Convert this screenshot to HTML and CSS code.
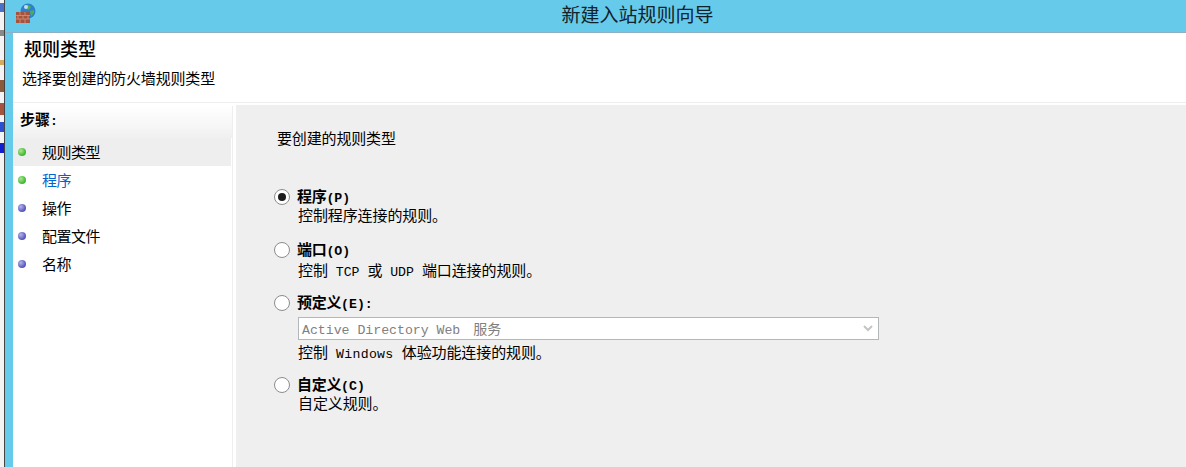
FILE: index.html
```html
<!DOCTYPE html>
<html lang="zh-CN">
<head>
  <meta charset="UTF-8">
  <title>新建入站规则向导</title>
  <link rel="stylesheet" href="styles.css">
</head>
<body>
  <div class="desktop">
    <i class="bit bit-a"></i>
    <i class="bit bit-b"></i>
    <i class="bit bit-c"></i>
    <i class="bit bit-d"></i>
    <i class="bit bit-e"></i>
    <i class="bit bit-f"></i>
    <i class="bit bit-g"></i>
  </div>

  <div class="window">
    <div class="titlebar">
      <svg class="app-icon" width="22" height="22" viewBox="0 0 22 22">
        <circle cx="13" cy="9" r="7.5" fill="#2f7fd0"/>
        <path d="M9 4c3-2 6-1 7 1l-2 3-3-1zM15 9l4-1 0 3-3 3z" fill="#4fb04a"/>
        <circle cx="11" cy="5" r="2" fill="#bfe0f5"/>
        <rect x="1" y="10" width="14" height="11" fill="#a5533c"/>
        <path d="M1 13.500h14M1 17h14M5 10v3.500M10 10v3.500M3 13.500v3.500M8 13.500v3.500M13 13.500v3.500M5 17v4M10 17v4" stroke="#c98a70" stroke-width="1" fill="none"/>
      </svg>
      <div class="title">新建入站规则向导</div>
    </div>

    <div class="head">
      <h1>规则类型</h1>
      <p>选择要创建的防火墙规则类型</p>
    </div>

    <div class="main">
      <div class="steps">
        <div class="steps-title">步骤<span class="latin">:</span></div>
        <ul>
          <li class="current"><span class="dot green"></span>规则类型</li>
          <li class="link"><span class="dot green"></span>程序</li>
          <li><span class="dot blue"></span>操作</li>
          <li><span class="dot blue"></span>配置文件</li>
          <li><span class="dot blue"></span>名称</li>
        </ul>
      </div>

      <div class="panel">
        <div class="question">要创建的规则类型</div>

        <div class="option first">
          <span class="radio checked"></span>
          <div class="option-body">
            <div class="label">程序<span class="latin">(P)</span></div>
            <div class="desc">控制程序连接的规则。</div>
          </div>
        </div>

        <div class="option second">
          <span class="radio"></span>
          <div class="option-body">
            <div class="label">端口<span class="latin">(O)</span></div>
            <div class="desc">控制<span class="latin"> TCP </span>或<span class="latin"> UDP </span>端口连接的规则。</div>
          </div>
        </div>

        <div class="option third">
          <span class="radio"></span>
          <div class="option-body">
            <div class="label">预定义<span class="latin">(E):</span></div>
            <div class="select">
              <span class="select-text"><span class="latin">Active Directory Web </span><span class="svc">服务</span></span>
              <svg width="10" height="7" viewBox="0 0 10 7"><path d="M1 1l4 4 4-4" fill="none" stroke="#c4c4c4" stroke-width="2"/></svg>
            </div>
            <div class="desc">控制<span class="latin"> Windows </span>体验功能连接的规则。</div>
          </div>
        </div>

        <div class="option fourth">
          <span class="radio"></span>
          <div class="option-body">
            <div class="label">自定义<span class="latin">(C)</span></div>
            <div class="desc">自定义规则。</div>
          </div>
        </div>
      </div>
    </div>
  </div>
</body>
</html>
```

FILE: styles.css
```css
html, body {
  margin: 0;
  height: 467px;
  overflow: hidden;
}

body {
  display: flex;
  font-family: "Noto Sans CJK SC", "Liberation Sans", sans-serif;
  font-size: 15px;
  color: #000;
  background: #fff;
}

.desktop {
  width: 4px;
  flex: none;
  display: flex;
  flex-direction: column;
  background: #f4f4f4;
  border-right: 1px solid #444;
}

.bit {
  display: block;
}

.bit-a { height: 9px; margin-top: 3px; background: #4a70c8; }
.bit-b { height: 6px; margin-top: 18px; background: #888; }
.bit-c { height: 5px; margin-top: 24px; background: #d8a860; }
.bit-d { height: 12px; margin-top: 15px; background: #8a5a3a; }
.bit-e { height: 12px; margin-top: 11px; background: #a5533c; }
.bit-f { height: 10px; margin-top: 7px; background: #2a4fd0; }
.bit-g { height: 10px; margin-top: 11px; background: #1020d0; }

.window {
  flex: 1;
  display: flex;
  flex-direction: column;
  border-left: 8px solid #66caea;
  min-width: 0;
}

.titlebar {
  height: 32px;
  flex: none;
  position: relative;
  background: #66caea;
  border-bottom: 1px solid #8fb0c4;
  margin-left: -8px;
  display: flex;
  align-items: center;
  justify-content: center;
}

.app-icon {
  position: absolute;
  left: 10px;
  top: 2px;
}

.title {
  font-size: 19px;
  color: #10222c;
  margin-left: 84px;
  padding-bottom: 5px;
}

.head {
  height: 70px;
  flex: none;
  box-sizing: border-box;
  padding: 2px 0 0 9px;
  border-bottom: 1px solid #eee;
}

.head h1 {
  margin: 0 0 0 2px;
  font-size: 18px;
  line-height: 26px;
  font-weight: 500;
}

.head p {
  margin: 6px 0 0;
  font-size: 15px;
  line-height: 22px;
  letter-spacing: -0.15px;
}

.main {
  flex: 1;
  display: flex;
  min-height: 0;
}

.steps {
  width: 220px;
  flex: none;
  box-sizing: border-box;
  margin-top: 3px;
  border-right: 1px solid #eee;
}

.steps-title {
  height: 32px;
  line-height: 26px;
  padding-left: 7px;
  font-weight: 700;
  background: linear-gradient(#fff, #f0f0f0);
}

.steps-title .latin {
  font-weight: 700;
}

.steps ul {
  list-style: none;
  margin: 0;
  padding: 0;
}

.steps li {
  height: 28px;
  width: 218px;
  box-sizing: border-box;
  padding-bottom: 1px;
  display: flex;
  align-items: center;
  letter-spacing: -0.5px;
}

.steps li.current {
  background: #eee;
}

.steps li.link {
  color: #0066cc;
}

.dot {
  width: 8px;
  height: 8px;
  border-radius: 50%;
  margin: 0 16px 0 5px;
}

.green {
  background: radial-gradient(circle at 35% 35%, #a8e890, #3fb52f 70%);
}

.blue {
  background: radial-gradient(circle at 35% 35%, #b4b4ea, #5252b8 70%);
}

.panel {
  flex: 1;
  margin: 2px 0 0 3px;
  background: #efefef;
  padding-left: 41px;
  min-width: 0;
}

.question {
  margin-top: 22px;
  line-height: 22px;
  letter-spacing: -0.15px;
}

.option {
  display: flex;
}

.first { margin-top: 37px; }
.second { margin-top: 15px; }
.third { margin-top: 10px; }
.fourth { margin-top: 10px; }

.radio {
  width: 14px;
  height: 14px;
  margin: 3px 7px 0 -3px;
  flex: none;
  border: 1px solid #8c8c8c;
  border-radius: 50%;
  background: #fff;
  display: flex;
  align-items: center;
  justify-content: center;
}

.radio.checked::after {
  content: "";
  width: 8px;
  height: 8px;
  border-radius: 50%;
  background: #1c1c1c;
}

.label {
  height: 19px;
  line-height: 19px;
  font-weight: 700;
  letter-spacing: -0.3px;
}

.label .latin {
  font-weight: 700;
}

.desc {
  margin-left: 1px;
  line-height: 19px;
  letter-spacing: -0.1px;
}

.second .desc {
  margin-top: 2px;
}

.latin {
  font-family: "Liberation Mono", "Noto Sans CJK SC", monospace;
  font-size: 13.2px;
  font-weight: 400;
  letter-spacing: 0;
  white-space: pre;
}

.third .desc .latin {
  letter-spacing: 0.3px;
}

.select {
  width: 581px;
  height: 23px;
  box-sizing: border-box;
  margin: 6px 0 2px 1px;
  padding: 0 5px 0 3px;
  border: 1px solid #b2b7b7;
  background: #fff;
  color: #808080;
  display: flex;
  align-items: center;
  justify-content: space-between;
}

.select-text {
  margin-top: -2px;
}

.svc {
  margin-left: 5px;
  font-size: 14px;
}
```
